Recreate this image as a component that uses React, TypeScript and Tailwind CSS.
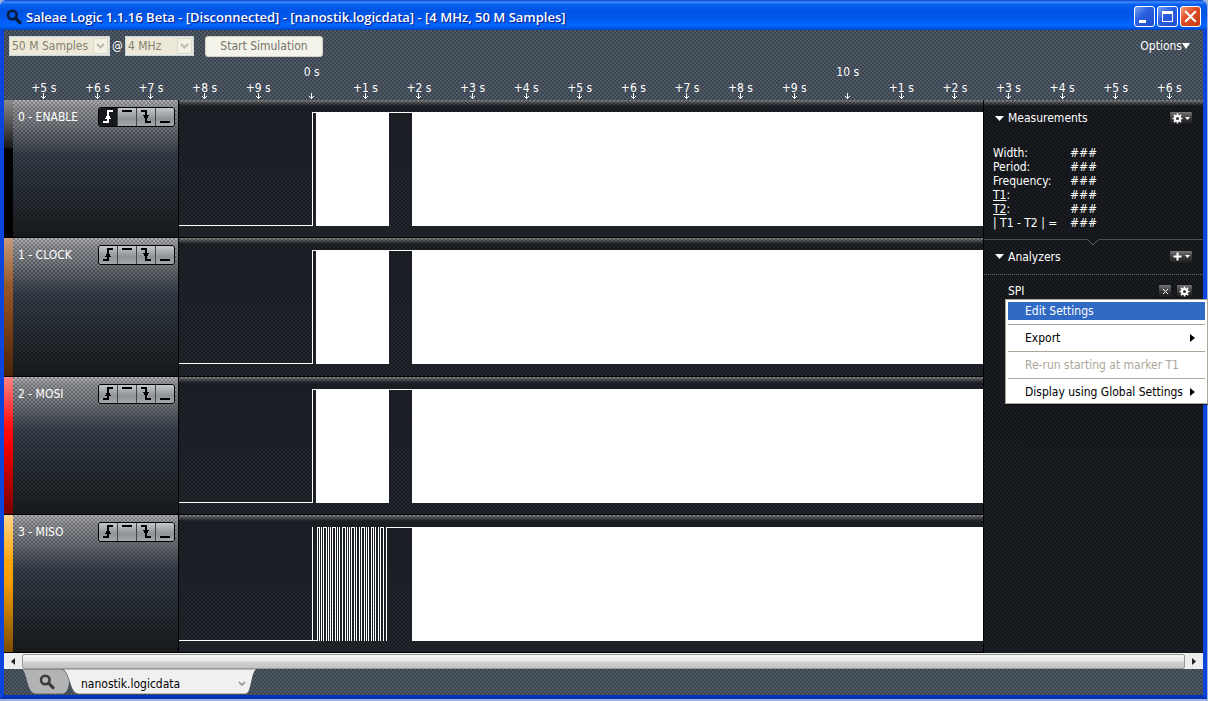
import React from "react";

const DOTS_DARK =
  "bg-[radial-gradient(circle_at_1px_1px,rgba(0,0,0,0.26)_0.8px,transparent_1.2px),radial-gradient(circle_at_3px_3px,rgba(0,0,0,0.26)_0.8px,transparent_1.2px)] bg-[size:4px_4px]";

type Channel = { name: string; stripe: string; sparse?: boolean; risingArmed?: boolean };

const channels: Channel[] = [
  { name: "0 - ENABLE", stripe: "bg-[linear-gradient(#8a8a8a,#1c1c1c_34%,#000_36%)]", risingArmed: true },
  { name: "1 - CLOCK", stripe: "bg-[linear-gradient(#c79b7c,#96592a_34%,#8b4a1c_50%,#4a2408)]" },
  { name: "2 - MOSI", stripe: "bg-[linear-gradient(#ff8585,#ff1414_34%,#f50000_50%,#780000)]" },
  { name: "3 - MISO", stripe: "bg-[linear-gradient(#ffd48c,#ffa50a_34%,#f59c00_50%,#7a4c00)]", sparse: true },
];

const ticks = [
  "+5 s", "+6 s", "+7 s", "+8 s", "+9 s", "", "+1 s", "+2 s", "+3 s", "+4 s", "+5 s",
  "+6 s", "+7 s", "+8 s", "+9 s", "", "+1 s", "+2 s", "+3 s", "+4 s", "+5 s", "+6 s",
];

const measurements = [
  { label: "Width:" },
  { label: "Period:" },
  { label: "Frequency:" },
  { label: "T1", marker: true },
  { label: "T2", marker: true },
  { label: "| T1 - T2 | =" },
];

const pulses = [
  [138, 140], [144, 147], [153, 156], [163, 166], [172, 175], [182, 185], [192, 194], [201, 204],
];
const edges = [142, 149, 151, 158, 160, 168, 170, 177, 180, 187, 189, 196, 199, 207];

function Magnifier({ className }: { className: string }) {
  return (
    <svg viewBox="0 0 16 16" className={className} aria-hidden="true">
      <circle cx="6.3" cy="6" r="4.3" fill="none" stroke="currentColor" strokeWidth="2.6" />
      <path d="M9.6 9.2l4.4 4.4" stroke="currentColor" strokeWidth="3.2" strokeLinecap="round" />
    </svg>
  );
}

function Gear() {
  return (
    <svg viewBox="0 0 12 12" className="size-[11px]" aria-hidden="true">
      <circle cx="6" cy="6" r="2.8" fill="none" stroke="#fff" strokeWidth="2.2" />
      <path
        d="M6 .5v2M6 9.5v2M.5 6h2M9.5 6h2M2.1 2.1l1.5 1.5M8.4 8.4l1.5 1.5M9.9 2.1L8.4 3.6M3.6 8.4L2.1 9.9"
        stroke="#fff"
        strokeWidth="1.8"
      />
    </svg>
  );
}

function Caret({ className }: { className: string }) {
  return (
    <svg viewBox="0 0 10 5" preserveAspectRatio="none" className={className} aria-hidden="true">
      <path d="M0 0h10L5 5z" fill="currentColor" />
    </svg>
  );
}

function TitleBar() {
  const base = "flex size-[21px] items-center justify-center rounded-[3px] border border-white";
  return (
    <header className="flex h-[30px] shrink-0 items-center gap-[4px] rounded-t-[7px] bg-[linear-gradient(#0a3fc8,#3c8cff_7%,#0a62f0_14%,#0054e3_35%,#0058ee_60%,#0066ff_85%,#0050d8_97%,#003ab8)] pl-[6px] pr-[6px] pt-[3px] text-white">
      <Magnifier className="size-[16px] text-[#0b1c38]" />
      <h1 className="flex-1 truncate font-['Open_Sans','Noto_Sans',sans-serif] text-[13px] font-semibold leading-[20px] [text-shadow:1px_1px_1px_#0a1883]">
        Saleae Logic 1.1.16 Beta - [Disconnected] - [nanostik.logicdata] - [4 MHz, 50 M Samples]
      </h1>
      <div className="flex gap-[2px]">
        <button aria-label="Minimize" className={base + " bg-[linear-gradient(135deg,#7ba4f4,#2c5fe0_40%,#1d4fd0)]"}>
          <svg viewBox="0 0 19 19" className="size-[19px]"><path d="M4 13h7v3H4z" fill="#fff" /></svg>
        </button>
        <button aria-label="Maximize" className={base + " bg-[linear-gradient(135deg,#7ba4f4,#2c5fe0_40%,#1d4fd0)]"}>
          <svg viewBox="0 0 19 19" className="size-[19px]"><path d="M4 4h11v11H4zM5 7v7h9V7z" fill="#fff" fillRule="evenodd" /></svg>
        </button>
        <button aria-label="Close" className={base + " bg-[linear-gradient(135deg,#f0a080,#e04f26_40%,#c83c12)]"}>
          <svg viewBox="0 0 19 19" className="size-[19px]"><path d="M5 5l9 9M14 5l-9 9" stroke="#fff" strokeWidth="2.2" strokeLinecap="square" /></svg>
        </button>
      </div>
    </header>
  );
}

function Picker({ label, value, width }: { label: string; value: string; width: string }) {
  return (
    <div className={"relative h-[20px] border border-[#c9d5dc] bg-[#ece9d8] text-[#85826f] " + width}>
      <select aria-label={label} disabled className="h-full w-full appearance-none pl-[2px] leading-[18px] opacity-100">
        <option>{value}</option>
      </select>
      <span className="pointer-events-none absolute inset-y-px right-px flex w-[15px] items-center justify-center rounded-[2px] border border-[#dcdacb] bg-[#f3f1e6]">
        <svg viewBox="0 0 9 6" className="h-[6px] w-[9px]"><path d="M1 1l3.5 3.5L8 1" fill="none" stroke="#bdbcae" strokeWidth="2" /></svg>
      </span>
    </div>
  );
}

function Toolbar() {
  return (
    <div className="flex h-[31px] items-center pl-[5px] pr-[13px] pt-px">
      <Picker label="Sample count" value="50 M Samples" width="w-[101px]" />
      <span className="w-[15px] text-center text-white">@</span>
      <Picker label="Sample rate" value="4 MHz" width="w-[69px]" />
      <button className="ml-[11px] h-[21px] w-[118px] rounded-[3px] border border-[#d5d3c6] bg-[#f4f3ea] text-[#77746a]">Start Simulation</button>
      <button className="ml-auto flex items-center text-white">
        Options
        <Caret className="h-[6px] w-[8px]" />
      </button>
    </div>
  );
}

function Timeline() {
  return (
    <ol className="flex h-[39px] pl-[13px] pr-[7px] text-white">
      {ticks.map((t, i) => (
        <li key={i} className="flex flex-1 basis-0 flex-col items-center leading-[16px]">
          <span className="h-[18px] pt-[3px]">{i === 5 ? "0 s" : i === 15 ? "10 s" : ""}</span>
          <span className="h-[14px] pt-px">{t}</span>
          <svg viewBox="0 0 5 6" className="h-[6px] w-[5px] shrink-0" shapeRendering="crispEdges" aria-hidden="true">
            <path d="M2 0h1v6H2zM0 3h1v1H0zM1 4h3v1H1zM4 3h1v1H4z" fill="#fff" />
          </svg>
        </li>
      ))}
    </ol>
  );
}

const triggerIcons = [
  { name: "Rising edge", d: "M4 13h4v-2H6v-1h1V8h1V2h6v2h-4v4h1v2h1v1h-2v4H4z" },
  { name: "High", d: "M4 2h10v2H4z" },
  { name: "Falling edge", d: "M4 2h6v5h2v1h-1v2h-1v3h4v2H8v-5H7V8H6V7h2V4H4z" },
  { name: "Low", d: "M4 13h10v2H4z" },
];

function TriggerButtons({ armed }: { armed?: boolean }) {
  return (
    <div className="flex h-[20px] w-[77px] shrink-0 overflow-hidden rounded-[3px] border border-black">
      {triggerIcons.map((icon, i) => {
        const on = armed && i === 0;
        return (
          <button
            key={icon.name}
            aria-label={icon.name}
            className={
              "flex flex-1 items-center justify-center " +
              (i > 0 ? "border-l border-[#444] " : "") +
              (on ? "bg-[#16181b] text-white" : "bg-[linear-gradient(#c4c7cb,#8f9398_60%,#a4a7ab)] text-black")
            }
          >
            <svg viewBox="0 0 18 18" className="size-[18px] shrink-0" shapeRendering="crispEdges">
              <path d={icon.d} fill="currentColor" />
            </svg>
          </button>
        );
      })}
    </div>
  );
}

function Waveform({ sparse }: { sparse?: boolean }) {
  return (
    <svg viewBox="0 0 804 137" preserveAspectRatio="none" className="block h-full w-full" shapeRendering="crispEdges" role="img" aria-label="Captured signal">
      <g fill="#fff">
        <path d="M0 125h134v1H0zM133 12h1v114h-1zM210 12h24v1h-24zM233 12h571v114H233z" />
        {sparse ? (
          <>
            <path d="M134 125h5v1h-5zM207 12h5v1h-5z" />
            {pulses.map(([a, b]) => (
              <path key={a} d={`M${a} 12H${b + 1}V126H${b}V13H${a + 1}V126H${a}z`} />
            ))}
            {edges.map((x) => (
              <path key={x} d={`M${x} 12h1v114h-1z`} />
            ))}
          </>
        ) : (
          <path d="M134 12h4v1h-4zM137 12h73v114h-73z" />
        )}
      </g>
    </svg>
  );
}

function ChannelRow({ channel }: { channel: Channel }) {
  return (
    <div className="flex min-h-[136px] flex-1 basis-0 border-b border-black">
      <div className={"w-[9px] shrink-0 " + channel.stripe} />
      <div className="w-[166px] shrink-0 border-r border-black bg-[linear-gradient(#b4b4b6,#94969a_6%,#7c8086_16%,#535961_30%,#36404c_40%,#2c333b_60%,#1a1d20)]">
        <div className={"flex h-full items-start justify-between pl-[5px] pr-[3px] pt-[7px] text-white " + DOTS_DARK}>
          <span className="leading-[20px]">{channel.name}</span>
          <TriggerButtons armed={channel.risingArmed} />
        </div>
      </div>
      <div className="min-w-0 flex-1 bg-[linear-gradient(#8a8a8a,#4c4e50_3px,#1e2228_6px,#22272e)]">
        <div className={"h-full " + DOTS_DARK}>
          <Waveform sparse={channel.sparse} />
        </div>
      </div>
    </div>
  );
}

const smallButton =
  "flex h-[14px] items-center justify-center rounded-[2px] border border-[#15171a] bg-[linear-gradient(#777,#3a3a3a_50%,#1c1c1c)] text-white";

function AnalyzerMenu() {
  const item = "flex h-[18px] w-full items-center justify-between pl-[17px] pr-[10px] text-left";
  const arrow = (
    <svg viewBox="0 0 5 8" className="h-[8px] w-[5px]" aria-hidden="true">
      <path d="M0 0v8l5-4z" fill="#000" />
    </svg>
  );
  return (
    <div role="menu" className="absolute right-[-5px] top-[17px] z-10 flex w-[203px] flex-col gap-[4px] border border-[#aca899] bg-white p-[2px] text-black shadow-[1px_1px_1px_rgba(0,0,0,0.5)]">
      <button role="menuitem" className={item + " bg-[#316ac5] text-white"}>Edit Settings</button>
      <hr className="border-[#aca899]" />
      <button role="menuitem" className={item}>Export{arrow}</button>
      <hr className="border-[#aca899]" />
      <button role="menuitem" disabled className={item + " text-[#aca899]"}>Re-run starting at marker T1</button>
      <hr className="border-[#aca899]" />
      <button role="menuitem" className={item + " whitespace-nowrap"}>Display using Global Settings{arrow}</button>
    </div>
  );
}

function SidePanel() {
  return (
    <aside className="w-[220px] shrink-0 border-l border-black bg-[linear-gradient(#8a8a8a,#4c4e50_3px,#181b1f_6px,#1b1f24)] text-white">
      <div className={"flex h-full flex-col " + DOTS_DARK}>
        <section className="relative h-[140px] border-b border-[#4a4e54] pl-[9px] pr-[10px] pt-[9px]">
          <div className="flex items-center">
            <Caret className="mx-[2px] h-[5px] w-[9px]" />
            <h2 className="ml-[2px] flex-1 leading-[18px]">Measurements</h2>
            <button aria-label="Measurement settings" className={smallButton + " w-[24px] gap-[2px]"}>
              <Gear /><Caret className="h-[3px] w-[5px]" />
            </button>
          </div>
          <dl className="grid grid-cols-[77px_1fr] pt-[19px] leading-[14px]">
            {measurements.map((m) => (
              <React.Fragment key={m.label}>
                <dt className="whitespace-nowrap">
                  {m.marker ? <><span className="underline underline-offset-1">{m.label}</span>:</> : m.label}
                </dt>
                <dd>###</dd>
              </React.Fragment>
            ))}
          </dl>
          <svg viewBox="0 0 12 7" className="absolute bottom-[-7px] left-[103px] h-[7px] w-[12px]" aria-hidden="true">
            <path d="M0 0h12L6 6z" fill="#15191d" />
            <path d="M.5 .5L6 6l5.5-5.5" fill="none" stroke="#5a5e64" />
          </svg>
        </section>
        <section className="flex h-[35px] items-center border-b border-dotted border-[#666a70] pl-[9px] pr-[10px] pb-px">
          <Caret className="mx-[2px] h-[5px] w-[9px]" />
          <h2 className="ml-[2px] flex-1 leading-[18px]">Analyzers</h2>
          <button aria-label="Add analyzer" className={smallButton + " w-[24px] gap-[3px]"}>
            <svg viewBox="0 0 9 9" className="size-[9px]"><path d="M3.5 .5h2v3h3v2h-3v3h-2v-3h-3v-2h3z" fill="#fff" /></svg>
            <Caret className="h-[3px] w-[5px]" />
          </button>
        </section>
        <div className="relative mt-[7px] flex items-center gap-[4px] pl-[24px] pr-[10px]">
          <span className="flex-1 leading-[18px]">SPI</span>
          <button aria-label="Remove SPI" className={smallButton + " w-[14px]"}>
            <svg viewBox="0 0 7 7" className="size-[7px]"><path d="M1 1l5 5M6 1L1 6" stroke="#fff" strokeWidth="1" /></svg>
          </button>
          <button aria-label="SPI settings" className={smallButton + " w-[17px]"}><Gear /></button>
          <AnalyzerMenu />
        </div>
      </div>
    </aside>
  );
}

function ScrollBar() {
  return (
    <div className="flex h-[16px] shrink-0 items-center bg-[#ededed]">
      <button aria-label="Scroll left" className="flex h-full w-[18px] items-center justify-center">
        <svg viewBox="0 0 4 7" className="h-[7px] w-[4px]"><path d="M4 0v7L0 3.5z" fill="#222" /></svg>
      </button>
      <div className="h-[15px] flex-1 rounded-[2px] border border-[#999] bg-[linear-gradient(#f6f6f6,#e6e6e6_48%,#cfd0d2_52%,#c2c3c5)]" />
      <button aria-label="Scroll right" className="flex h-full w-[18px] items-center justify-center">
        <svg viewBox="0 0 4 7" className="h-[7px] w-[4px]"><path d="M0 0v7l4-3.5z" fill="#222" /></svg>
      </button>
    </div>
  );
}

function TabStrip() {
  return (
    <nav className="h-[26px] shrink-0 bg-[#4f5a68]">
      <div className={"h-full " + DOTS_DARK}>
        <div className="relative h-[25px] w-[254px]">
          <svg viewBox="0 0 254 25" className="absolute inset-0 h-full w-full" aria-hidden="true">
            <path d="M17 0C23 2 22 24 31 25H59C64 24 65 18 66 10L62 0z" fill="#b2b3b5" stroke="#30353c" strokeWidth=".6" />
            <path d="M58 0C66 2 65 24 74 25H242C248 24 247 2 253 0z" fill="#f0f0f0" stroke="#30353c" strokeWidth=".6" />
          </svg>
          <div className="relative flex h-full items-center pl-[35px]">
            <button aria-label="Search" className="text-[#3c3c3c]"><Magnifier className="size-[16px]" /></button>
            <button className="ml-[26px] flex w-[165px] items-center justify-between pt-[4px] text-black">
              nanostik.logicdata
              <svg viewBox="0 0 8 6" className="h-[6px] w-[8px]"><path d="M1 1l3 3 3-3" fill="none" stroke="#888" strokeWidth="1.5" /></svg>
            </button>
          </div>
        </div>
      </div>
    </nav>
  );
}

export default function App() {
  return (
    <div className="flex min-h-screen flex-col overflow-hidden bg-[#9fb0dc] pb-[2px] pr-px font-['DejaVu_Sans_Condensed','DejaVu_Sans',sans-serif] text-[12px]">
      <div className="flex flex-1 flex-col rounded-t-[7px] bg-[#0a3fd6]">
        <TitleBar />
        <div className="flex flex-1 flex-col border-x-4 border-b-4 border-x-[#0b45dc] border-b-[#0632b8]">
          <div className="bg-[#4f5a68]">
            <div className={DOTS_DARK}>
              <Toolbar />
              <Timeline />
            </div>
          </div>
          <main className="flex flex-1">
            <div className="flex min-w-0 flex-1 flex-col">
              {channels.map((c) => (
                <ChannelRow key={c.name} channel={c} />
              ))}
            </div>
            <SidePanel />
          </main>
          <ScrollBar />
          <TabStrip />
        </div>
      </div>
    </div>
  );
}
